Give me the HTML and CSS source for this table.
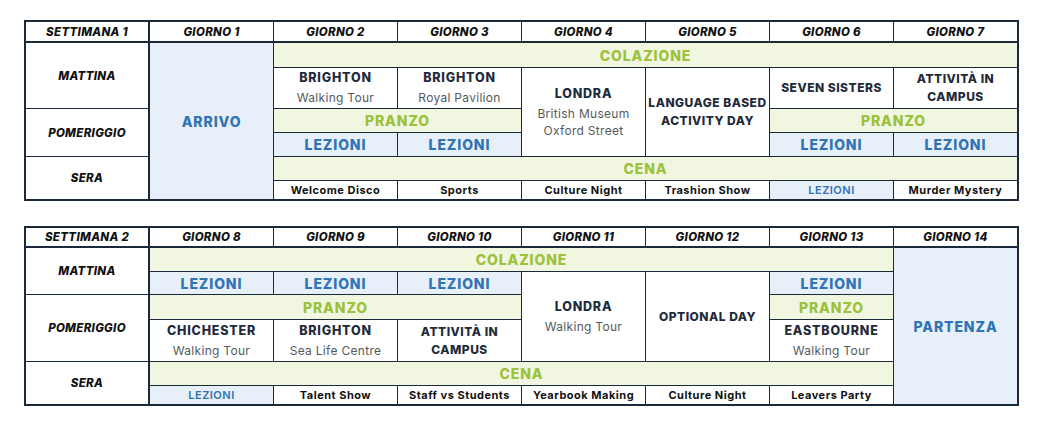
FILE: index.html
```html
<!DOCTYPE html>
<html lang="it">
<head>
<meta charset="utf-8">
<title>Programma</title>
<link rel="stylesheet" href="styles.css">
</head>
<body>
<div class="page">
  <div class="sched sched-1">
    <div class="c hd first">SETTIMANA 1</div>
    <div class="c hd">GIORNO 1</div>
    <div class="c hd">GIORNO 2</div>
    <div class="c hd">GIORNO 3</div>
    <div class="c hd">GIORNO 4</div>
    <div class="c hd">GIORNO 5</div>
    <div class="c hd">GIORNO 6</div>
    <div class="c hd">GIORNO 7</div>

    <div class="c lbl first" style="grid-column:1;grid-row:2 / 4">MATTINA</div>
    <div class="c lbl first" style="grid-column:1;grid-row:4 / 6">POMERIGGIO</div>
    <div class="c lbl first" style="grid-column:1;grid-row:6 / 8">SERA</div>

    <div class="c blue big" style="grid-column:2;grid-row:2 / 8">ARRIVO</div>

    <div class="c green" style="grid-column:3 / 9;grid-row:2">COLAZIONE</div>

    <div class="c act" style="grid-column:3;grid-row:3"><span class="t">BRIGHTON</span><span class="s">Walking Tour</span></div>
    <div class="c act" style="grid-column:4;grid-row:3"><span class="t">BRIGHTON</span><span class="s">Royal Pavilion</span></div>
    <div class="c act" style="grid-column:5;grid-row:3 / 6"><span class="t">LONDRA</span><span class="s">British Museum</span><span class="s2">Oxford Street</span></div>
    <div class="c act" style="grid-column:6;grid-row:3 / 6"><span class="t2">LANGUAGE BASED<br>ACTIVITY DAY</span></div>
    <div class="c act" style="grid-column:7;grid-row:3"><span class="t2">SEVEN SISTERS</span></div>
    <div class="c act" style="grid-column:8;grid-row:3"><span class="t2">ATTIVITÀ IN<br>CAMPUS</span></div>

    <div class="c green" style="grid-column:3 / 5;grid-row:4">PRANZO</div>
    <div class="c green" style="grid-column:7 / 9;grid-row:4">PRANZO</div>

    <div class="c blue" style="grid-column:3;grid-row:5">LEZIONI</div>
    <div class="c blue" style="grid-column:4;grid-row:5">LEZIONI</div>
    <div class="c blue" style="grid-column:7;grid-row:5">LEZIONI</div>
    <div class="c blue" style="grid-column:8;grid-row:5">LEZIONI</div>

    <div class="c green" style="grid-column:3 / 9;grid-row:6">CENA</div>

    <div class="c eve" style="grid-column:3;grid-row:7">Welcome Disco</div>
    <div class="c eve" style="grid-column:4;grid-row:7">Sports</div>
    <div class="c eve" style="grid-column:5;grid-row:7">Culture Night</div>
    <div class="c eve" style="grid-column:6;grid-row:7">Trashion Show</div>
    <div class="c eve blue-sm" style="grid-column:7;grid-row:7">LEZIONI</div>
    <div class="c eve" style="grid-column:8;grid-row:7">Murder Mystery</div>
  </div>

  <div class="sched sched-2">
    <div class="c hd first">SETTIMANA 2</div>
    <div class="c hd">GIORNO 8</div>
    <div class="c hd">GIORNO 9</div>
    <div class="c hd">GIORNO 10</div>
    <div class="c hd">GIORNO 11</div>
    <div class="c hd">GIORNO 12</div>
    <div class="c hd">GIORNO 13</div>
    <div class="c hd">GIORNO 14</div>

    <div class="c lbl first" style="grid-column:1;grid-row:2 / 4">MATTINA</div>
    <div class="c lbl first" style="grid-column:1;grid-row:4 / 6">POMERIGGIO</div>
    <div class="c lbl first" style="grid-column:1;grid-row:6 / 8">SERA</div>

    <div class="c green" style="grid-column:2 / 8;grid-row:2">COLAZIONE</div>
    <div class="c blue big" style="grid-column:8;grid-row:2 / 8">PARTENZA</div>

    <div class="c blue" style="grid-column:2;grid-row:3">LEZIONI</div>
    <div class="c blue" style="grid-column:3;grid-row:3">LEZIONI</div>
    <div class="c blue" style="grid-column:4;grid-row:3">LEZIONI</div>
    <div class="c act" style="grid-column:5;grid-row:3 / 6"><span class="t">LONDRA</span><span class="s">Walking Tour</span></div>
    <div class="c act" style="grid-column:6;grid-row:3 / 6"><span class="t2">OPTIONAL DAY</span></div>
    <div class="c blue" style="grid-column:7;grid-row:3">LEZIONI</div>

    <div class="c green" style="grid-column:2 / 5;grid-row:4">PRANZO</div>
    <div class="c green" style="grid-column:7;grid-row:4">PRANZO</div>

    <div class="c act" style="grid-column:2;grid-row:5"><span class="t">CHICHESTER</span><span class="s">Walking Tour</span></div>
    <div class="c act" style="grid-column:3;grid-row:5"><span class="t">BRIGHTON</span><span class="s">Sea Life Centre</span></div>
    <div class="c act" style="grid-column:4;grid-row:5"><span class="t2">ATTIVITÀ IN<br>CAMPUS</span></div>
    <div class="c act" style="grid-column:7;grid-row:5"><span class="t">EASTBOURNE</span><span class="s">Walking Tour</span></div>

    <div class="c green" style="grid-column:2 / 8;grid-row:6">CENA</div>

    <div class="c eve blue-sm" style="grid-column:2;grid-row:7">LEZIONI</div>
    <div class="c eve" style="grid-column:3;grid-row:7">Talent Show</div>
    <div class="c eve" style="grid-column:4;grid-row:7">Staff vs Students</div>
    <div class="c eve" style="grid-column:5;grid-row:7">Yearbook Making</div>
    <div class="c eve" style="grid-column:6;grid-row:7">Culture Night</div>
    <div class="c eve" style="grid-column:7;grid-row:7">Leavers Party</div>
  </div>
</div>
</body>
</html>
```

FILE: styles.css
```css
html, body {
  margin: 0;
  padding: 0;
  background: #ffffff;
}

.page {
  padding: 20px 0 0 24px;
  font-family: "Inter", "Open Sans", "Liberation Sans", sans-serif;
}

.sched {
  width: 995px;
  box-sizing: border-box;
  display: grid;
  grid-template-columns: repeat(8, 1fr);
  gap: 1px;
  background: #1b2a3a;
  border: 2px solid #1b2a3a;
}

.sched-1 {
  grid-template-rows: 20px 24px 40px 23px 23px 23px 18px;
}

.sched-2 {
  margin-top: 25px;
  grid-template-rows: 19px 23px 22px 24px 41px 23px 18px;
}

.c {
  background: #ffffff;
  display: flex;
  flex-direction: column;
  align-items: center;
  justify-content: center;
  text-align: center;
  min-width: 0;
}

.first {
  margin-right: 1px;
}

.hd {
  margin-bottom: 1px;
  font-size: 11.5px;
  font-weight: 800;
  font-style: italic;
  color: #111111;
  letter-spacing: 0.3px;
}

.lbl {
  font-size: 11.5px;
  font-weight: 800;
  font-style: italic;
  color: #111111;
  letter-spacing: 0.3px;
}

.green {
  background: #f1f6e1;
  color: #9cc13b;
  font-size: 14px;
  font-weight: 800;
  letter-spacing: 0.9px;
}

.blue {
  background: #e7eff9;
  color: #2f74b5;
  font-size: 14px;
  font-weight: 800;
  letter-spacing: 0.9px;
}

.act {
  color: #1f2b3b;
}

.act .t {
  font-size: 12.5px;
  font-weight: 800;
  letter-spacing: 0.8px;
  line-height: 16px;
}

.act .t2 {
  font-size: 12px;
  font-weight: 800;
  letter-spacing: 0.5px;
  line-height: 18px;
}

.act .s {
  margin-top: 4px;
  font-size: 12px;
  font-weight: 400;
  color: #555a60;
  line-height: 16px;
  letter-spacing: 0.3px;
}

.act .s2 {
  margin-top: 1px;
  font-size: 12px;
  font-weight: 400;
  color: #555a60;
  line-height: 16px;
  letter-spacing: 0.3px;
}

.eve {
  font-size: 11px;
  font-weight: 700;
  color: #111111;
  letter-spacing: 0.5px;
}

.blue-sm {
  background: #e7eff9;
  color: #2f74b5;
  font-weight: 600;
  letter-spacing: 0.5px;
}
```
